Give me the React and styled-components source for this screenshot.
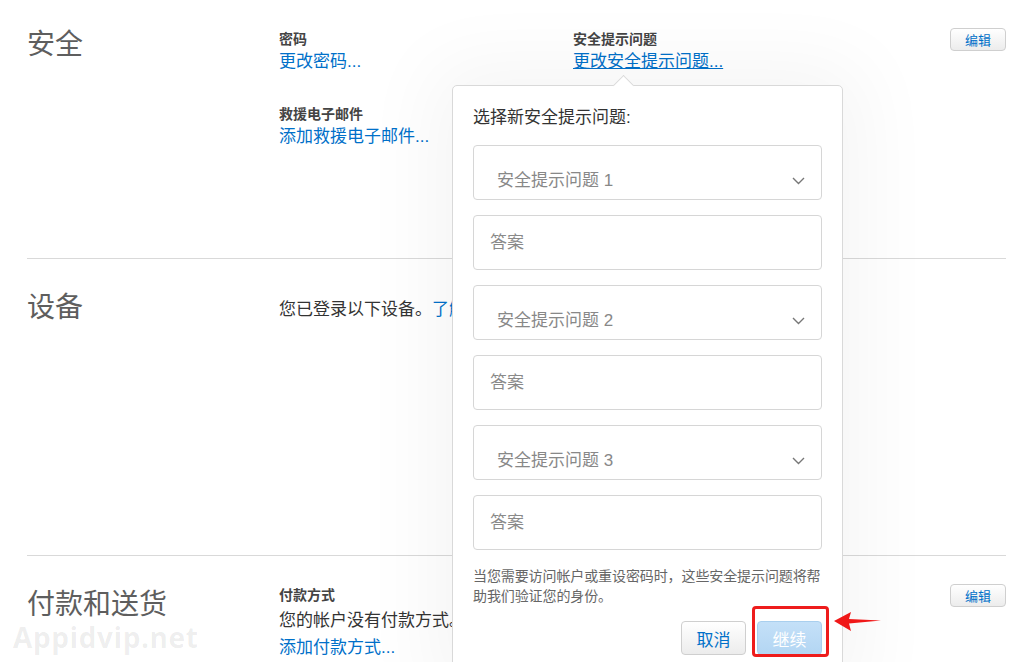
import React from 'react'
import styled, { createGlobalStyle } from 'styled-components'

const GlobalStyle = createGlobalStyle`
  * { box-sizing: border-box; }
  html, body {
    margin: 0;
    overflow: hidden;
    background: #fff;
    font-family: "Liberation Sans", "Noto Sans CJK SC", sans-serif;
    color: #333;
  }
`

const ChevronDown = () => (
  <svg width="13" height="8" viewBox="0 0 13 8">
    <polyline points="1,1 6.5,6.5 12,1" fill="none" stroke="#777" strokeWidth="1.4" />
  </svg>
)

const RedArrow = () => (
  <svg width="48" height="22" viewBox="0 0 48 22">
    <path d="M0 10 L17 1 L15 8 L47 9.5 L15 12.5 L17 20 Z" fill="#f01818" />
  </svg>
)

function SecurityPopover() {
  const questions = [1, 2, 3]
  return (
    <Popover>
      <PopTitle>选择新安全提示问题:</PopTitle>
      {questions.map(n => (
        <React.Fragment key={n}>
          <Select>
            <span>安全提示问题 {n}</span>
            <ChevronDown />
          </Select>
          <Answer type="text" placeholder="答案" />
        </React.Fragment>
      ))}
      <Help>当您需要访问帐户或重设密码时，这些安全提示问题将帮助我们验证您的身份。</Help>
      <Actions>
        <Button>取消</Button>
        <Highlight>
          <Button $primary>继续</Button>
          <Marker />
          <ArrowSpot><RedArrow /></ArrowSpot>
        </Highlight>
      </Actions>
    </Popover>
  )
}

export default function App() {
  return (
    <>
      <GlobalStyle />
      <Page>
        <Section $height={259}>
          <SectionTitle $top={5}>安全</SectionTitle>
          <Fields>
            <Field>
              <Label>密码</Label>
              <Link>更改密码...</Link>
            </Field>
            <Field>
              <Label>安全提示问题</Label>
              <Link $underline>更改安全提示问题...</Link>
              <SecurityPopover />
            </Field>
            <Field>
              <Label>救援电子邮件</Label>
              <Link>添加救援电子邮件...</Link>
            </Field>
          </Fields>
          <EditButton>编辑</EditButton>
        </Section>

        <Section $height={297}>
          <SectionTitle $top={9}>设备</SectionTitle>
          <Description>
            您已登录以下设备。<Link>了解更多</Link>
          </Description>
        </Section>

        <Section $last>
          <SectionTitle $top={9}>付款和送货</SectionTitle>
          <Fields>
            <Field>
              <Label>付款方式</Label>
              <Text>您的帐户没有付款方式。</Text>
              <Link>添加付款方式...</Link>
            </Field>
          </Fields>
          <EditButton>编辑</EditButton>
        </Section>

        <Watermark>Appidvip.net</Watermark>
      </Page>
    </>
  )
}

const Page = styled.div`
  position: relative;
  height: 662px;
  padding: 0 27px;
  overflow: hidden;
`
const Section = styled.section`
  display: grid;
  grid-template-columns: 252px 1fr 56px;
  align-items: start;
  min-height: ${p => (p.$height ? p.$height + 'px' : 'auto')};
  padding-top: 26px;
  border-bottom: ${p => (p.$last ? 'none' : '1px solid #d9d9d9')};
`
const SectionTitle = styled.h2`
  margin: ${p => p.$top || 0}px 0 0;
  font-size: 28px;
  font-weight: 400;
  line-height: 28px;
  color: #5e5e5e;
`
const Fields = styled.div`
  display: grid;
  grid-template-columns: 294px 1fr;
  row-gap: 34px;
  margin-top: 5px;
`
const Field = styled.div`
  position: relative;
  display: flex;
  flex-direction: column;
  align-items: flex-start;
  gap: 3px;
`
const Label = styled.div`
  font-size: 14px;
  font-weight: 700;
  line-height: 17px;
  color: #444;
`
const Link = styled.a`
  font-size: 17px;
  line-height: 21px;
  color: #0070c9;
  cursor: pointer;
  text-decoration: ${p => (p.$underline ? 'underline' : 'none')};
`
const Text = styled.div`
  margin: 3px 0 3px;
  font-size: 17px;
  line-height: 21px;
  color: #333;
`
const Description = styled.div`
  margin-top: 14px;
  font-size: 17px;
  line-height: 21px;
  color: #333;
`
const EditButton = styled.button`
  margin-top: 2px;
  width: 56px;
  height: 23px;
  padding: 0;
  font-family: inherit;
  font-size: 13px;
  color: #0070c9;
  background: linear-gradient(#ffffff, #ececec);
  border: 1px solid #cfcfcf;
  border-radius: 4px;
`
const Popover = styled.div`
  position: absolute;
  top: 54px;
  left: -121px;
  z-index: 2;
  width: 391px;
  display: flex;
  flex-direction: column;
  gap: 15px;
  padding: 21px 20px 30px;
  background: #fff;
  border: 1px solid #d9d9d9;
  border-radius: 5px;
  box-shadow: 0 0 80px 20px rgba(0, 0, 0, 0.045);

  &::before {
    content: '';
    position: absolute;
    top: -8px;
    left: 163px;
    width: 14px;
    height: 14px;
    background: #fff;
    border-top: 1px solid #d9d9d9;
    border-left: 1px solid #d9d9d9;
    transform: rotate(45deg);
  }
`
const PopTitle = styled.div`
  font-size: 17px;
  line-height: 21px;
  color: #333;
  margin-bottom: 2px;
`
const Select = styled.div`
  height: 55px;
  display: flex;
  align-items: flex-end;
  justify-content: space-between;
  padding: 0 16px 8px 23px;
  font-size: 17px;
  line-height: 21px;
  color: #888;
  border: 1px solid #d6d6d6;
  border-radius: 4px;

  svg {
    margin-bottom: 6px;
  }
`
const Answer = styled.input`
  height: 55px;
  width: 100%;
  padding: 0 16px;
  font-family: inherit;
  font-size: 17px;
  color: #333;
  border: 1px solid #d6d6d6;
  border-radius: 4px;
  outline: none;

  &::placeholder {
    color: #8a8a8a;
  }
`
const Help = styled.p`
  margin: 1px -4px 0 0;
  font-size: 14px;
  line-height: 20px;
  letter-spacing: -0.1px;
  color: #666;
`
const Actions = styled.div`
  display: flex;
  justify-content: flex-end;
  gap: 11px;
`
const Button = styled.button`
  width: 65px;
  height: 34px;
  padding: 0;
  font-family: inherit;
  font-size: 17px;
  border-radius: 4px;
  color: ${p => (p.$primary ? '#fff' : '#0070c9')};
  background: ${p => (p.$primary ? 'linear-gradient(#c4e0f8, #b3d6f3)' : 'linear-gradient(#ffffff, #ececec)')};
  border: 1px solid ${p => (p.$primary ? '#a9cfee' : '#cfcfcf')};
`
const Highlight = styled.div`
  position: relative;
`
const Marker = styled.div`
  position: absolute;
  top: -15px;
  left: -5px;
  right: -7px;
  bottom: -2px;
  border: 3px solid #ee1c1c;
  border-radius: 4px;
`
const ArrowSpot = styled.div`
  position: absolute;
  top: -10px;
  left: 77px;
  display: flex;
`
const Watermark = styled.div`
  position: absolute;
  left: 13px;
  top: 623px;
  font-family: "Open Sans", "Liberation Sans", sans-serif;
  font-size: 28px;
  line-height: 1;
  font-weight: 700;
  letter-spacing: 0.6px;
  color: rgba(0, 0, 0, 0.075);
  pointer-events: none;
`
